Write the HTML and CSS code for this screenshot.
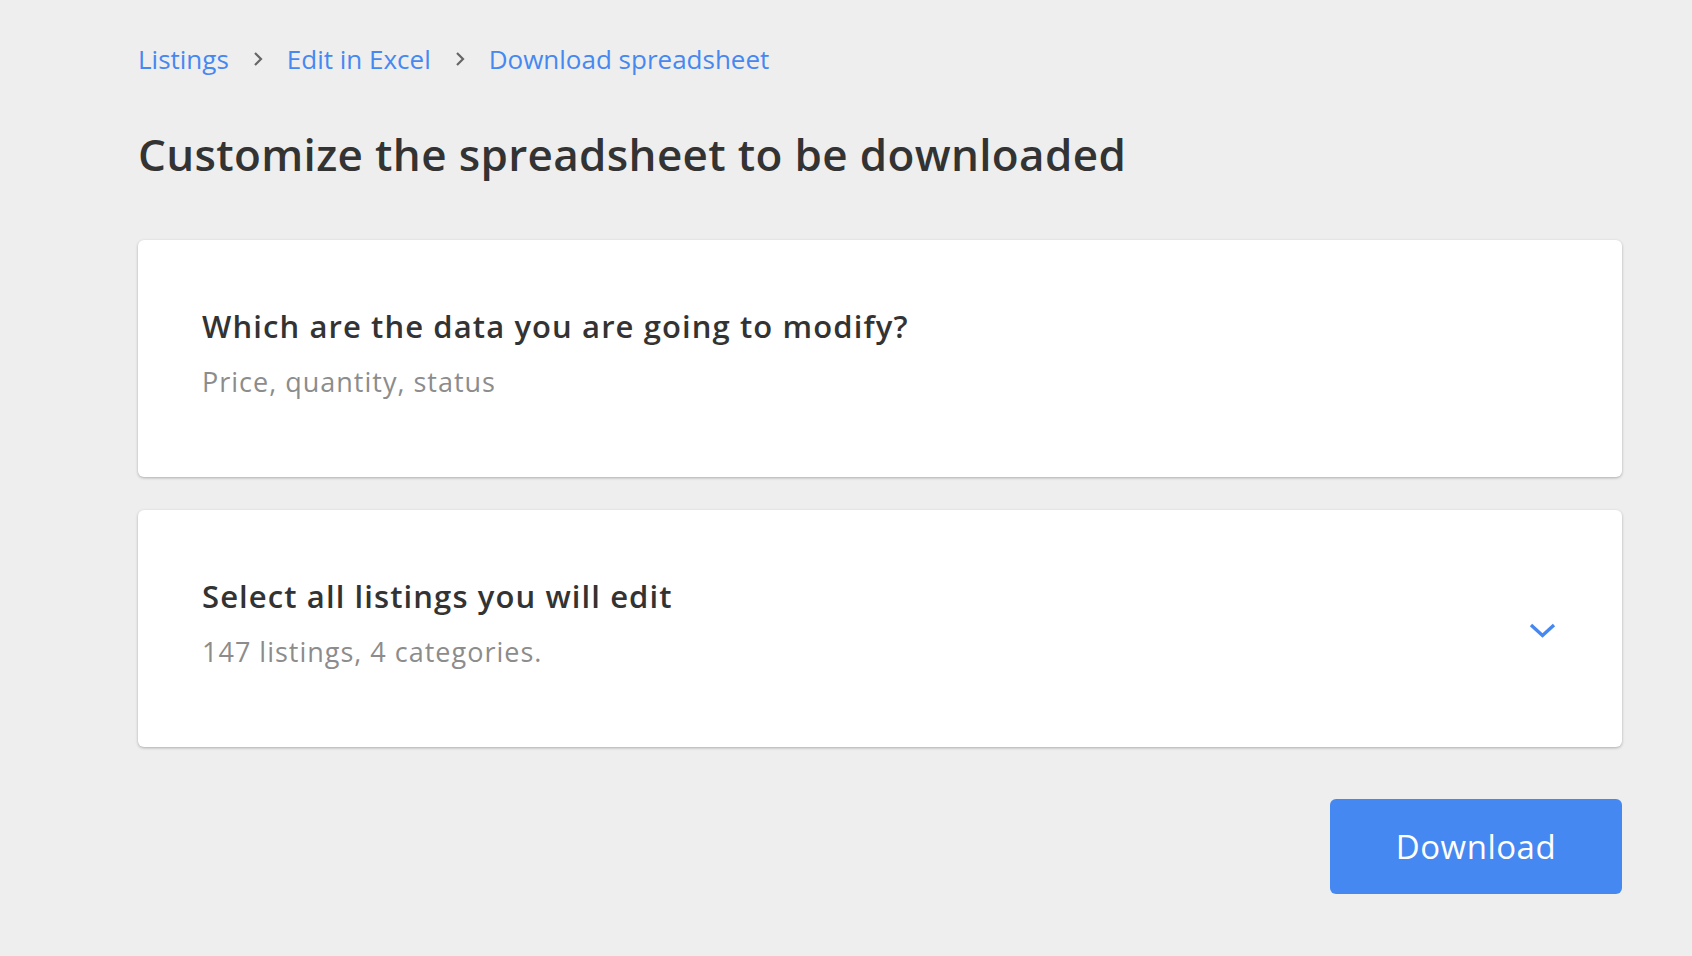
FILE: index.html
```html
<!DOCTYPE html>
<html lang="en">
<head>
<meta charset="utf-8">
<title>Customize the spreadsheet</title>
<link rel="stylesheet" href="styles.css">
</head>
<body>
<main class="page">
  <nav class="breadcrumb">
    <a class="crumb" href="#">Listings</a>
    <svg class="sep" viewBox="0 0 10 16" width="10" height="16"><path d="M2 2 L8 8 L2 14" fill="none" stroke="#666" stroke-width="2.2"/></svg>
    <a class="crumb" href="#">Edit in Excel</a>
    <svg class="sep" viewBox="0 0 10 16" width="10" height="16"><path d="M2 2 L8 8 L2 14" fill="none" stroke="#666" stroke-width="2.2"/></svg>
    <a class="crumb" href="#">Download spreadsheet</a>
  </nav>
  <h1 class="title">Customize the spreadsheet to be downloaded</h1>
  <section class="card">
    <div class="card-text">
      <h2 class="card-heading">Which are the data you are going to modify?</h2>
      <p class="card-sub">Price, quantity, status</p>
    </div>
  </section>
  <section class="card card-expand">
    <div class="card-text">
      <h2 class="card-heading">Select all listings you will edit</h2>
      <p class="card-sub">147 listings, 4 categories.</p>
    </div>
    <svg class="chev" viewBox="0 0 27 16" width="27" height="16"><path d="M2 3 L13.5 13.5 L25 3" fill="none" stroke="#4688f1" stroke-width="3.4"/></svg>
  </section>
  <div class="actions">
    <button class="btn" type="button">Download</button>
  </div>
</main>
</body>
</html>
```
FILE: styles.css
```css
html, body {
  margin: 0;
  padding: 0;
}
body {
  background: #eeeeee;
  font-family: "Open Sans", "Lato", sans-serif;
  color: #333333;
}
.page {
  padding: 40px 70px 40px 138px;
}
.breadcrumb {
  display: flex;
  align-items: center;
  height: 38px;
  gap: 24px;
}
.crumb {
  color: #4688f1;
  text-decoration: none;
  font-size: 26px;
  letter-spacing: 0;
  line-height: 38px;
}
.sep {
  display: block;
}
.title {
  margin: 50px 0 0 0;
  font-size: 44px;
  letter-spacing: 0.35px;
  line-height: 52px;
  font-weight: 600;
  color: #333333;
}
.card {
  margin-top: 60px;
  background: #ffffff;
  border-radius: 6px;
  box-shadow: 0 1px 3px rgba(0, 0, 0, 0.28);
  height: 237px;
  box-sizing: border-box;
  padding: 66px 64px 0 64px;
}
.card + .card {
  margin-top: 33px;
}
.card-expand {
  display: flex;
  justify-content: space-between;
  align-items: flex-start;
  padding-right: 66px;
}
.chev {
  display: block;
  margin-top: 46px;
}
.card-heading {
  margin: 0;
  font-size: 31px;
  letter-spacing: 1.1px;
  line-height: 40px;
  font-weight: 600;
  color: #333333;
}
.card-sub {
  margin: 19px 0 0 0;
  font-size: 27px;
  letter-spacing: 1px;
  line-height: 34px;
  color: #8c8c8c;
}
.actions {
  display: flex;
  justify-content: flex-end;
  margin-top: 52px;
}
.btn {
  width: 292px;
  height: 95px;
  border: none;
  border-radius: 6px;
  background: #4688f1;
  color: #ffffff;
  font-family: inherit;
  font-size: 33px;
  letter-spacing: 0.5px;
  cursor: pointer;
}
```
